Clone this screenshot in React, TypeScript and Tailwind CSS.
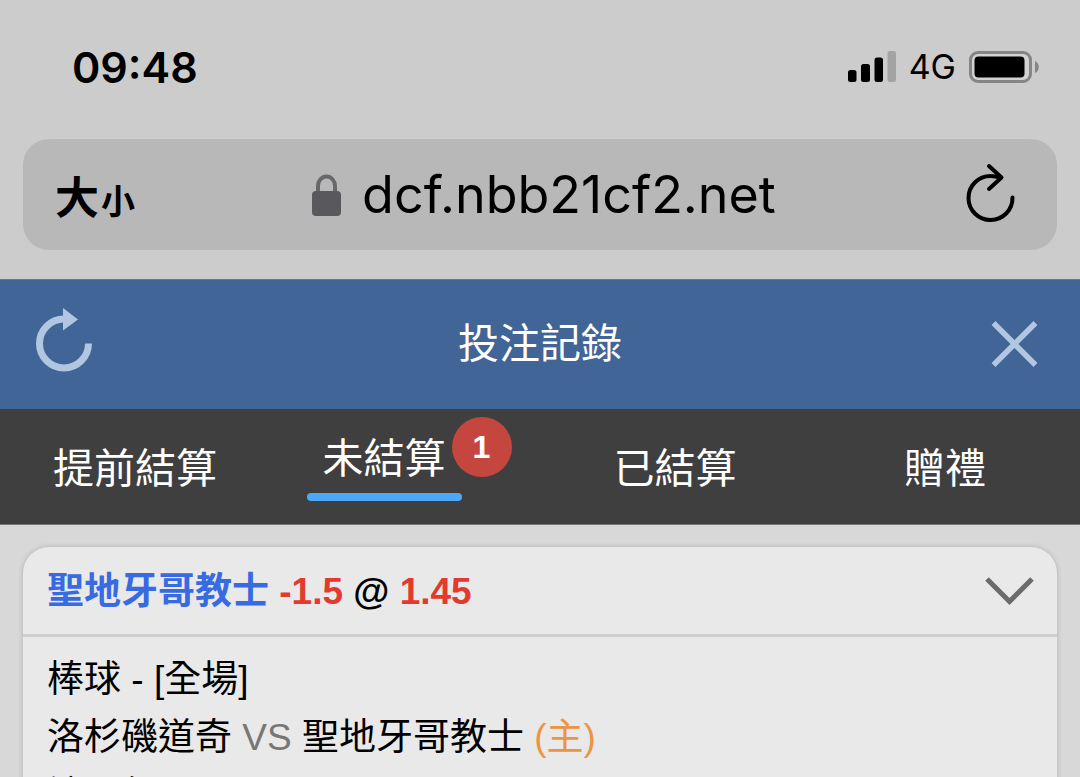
import React, { useState } from "react";

interface Tab {
  id: string;
  label: string;
  count?: number;
}

interface Bet {
  pick: string;
  handicap: string;
  odds: string;
  sport: string;
  period: string;
  away: string;
  home: string;
  market: string;
}

const TABS: Tab[] = [
  { id: "cashout", label: "提前結算" },
  { id: "open", label: "未結算", count: 1 },
  { id: "settled", label: "已結算" },
  { id: "gift", label: "贈禮" },
];

const BETS: Bet[] = [
  {
    pick: "聖地牙哥教士",
    handicap: "-1.5",
    odds: "1.45",
    sport: "棒球",
    period: "全場",
    away: "洛杉磯道奇",
    home: "聖地牙哥教士",
    market: "讓分盤",
  },
];

const StatusBar: React.FC = () => (
  <div className="flex h-[139px] items-start justify-between pt-[42px] pr-10 pl-[72px] font-['Inter',sans-serif]">
    <span className="text-[43px] leading-[50px] font-semibold">09:48</span>
    <div className="flex h-[50px] items-center gap-[13px]">
      <svg width="48" height="32" viewBox="0 0 48 32" aria-hidden="true">
        <rect x="0" y="19" width="8.5" height="12" rx="2.5" />
        <rect x="13" y="13" width="9" height="18" rx="2.5" />
        <rect x="26.500" y="6.500" width="8.5" height="24.500" rx="2.5" />
        <rect x="39.500" y="0" width="8.5" height="31" rx="2.5" fill="#a3a3a3" />
      </svg>
      <span className="text-[34px] leading-[50px]">4G</span>
      <svg width="71" height="32" viewBox="0 0 71 32" aria-hidden="true">
        <rect x="1.500" y="1.500" width="60" height="29" rx="7.500" fill="#d2d2d2" stroke="#858585" strokeWidth="3" />
        <rect x="5.500" y="5.500" width="50" height="21" rx="4" />
        <path d="M66 10c5 2 5 10 0 12z" fill="#858585" />
      </svg>
    </div>
  </div>
);

const AddressBar: React.FC = () => (
  <div className="mx-[23px] flex h-[111px] items-center justify-between rounded-[26px] bg-[#b8b8b8] pr-10 pl-8">
    <button
      type="button"
      className="flex items-baseline gap-0.5 font-['Noto_Sans_CJK_TC',sans-serif] font-bold"
    >
      <span className="text-[44px]">大</span>
      <span className="text-[34px]">小</span>
    </button>
    <div className="flex items-center gap-5">
      <svg width="30" height="42" viewBox="0 0 30 42" aria-hidden="true">
        <path d="M6 20V12a8.500 9.500 0 0 1 17 0v8" fill="none" stroke="#68686c" strokeWidth="4" />
        <rect x="0" y="17" width="29" height="25" rx="4" fill="#58585d" />
      </svg>
      <span className="font-['Inter',sans-serif] text-[52px] leading-[60px]">dcf.nbb21cf2.net</span>
    </div>
    <button type="button" aria-label="重新載入">
      <svg
        width="64"
        height="68"
        viewBox="0 0 64 68"
        fill="none"
        stroke="#000"
        strokeWidth="4"
        strokeLinecap="round"
        strokeLinejoin="round"
      >
        <path d="M47.500 16.800C44 15.500 41 15 37.500 15A22 22 0 1 0 59.500 36.500" />
        <path d="M36 5L48.500 16.500L36 28" />
      </svg>
    </button>
  </div>
);

const TitleBar: React.FC = () => (
  <header className="flex h-[130px] items-center justify-between border-t border-[#5f7796] bg-[#416596] pr-10 pl-9 text-white">
    <button type="button" aria-label="重新整理">
      <svg width="58" height="74" viewBox="0 0 58 74">
        <path d="M28 11A24.500 24.500 0 1 0 52.500 35.500" fill="none" stroke="#b1c7e1" strokeWidth="7" />
        <path d="M27 0L42 11.500L27 22.500z" fill="#b1c7e1" />
      </svg>
    </button>
    <h1 className="text-[41px]">投注記錄</h1>
    <button type="button" aria-label="關閉">
      <svg width="54" height="50" viewBox="0 0 54 50" stroke="#b1c7e1" strokeWidth="5.500">
        <path d="M7.500 3L49.500 45M49.500 3L7.500 45" />
      </svg>
    </button>
  </header>
);

interface TabBarProps {
  activeId: string;
  onSelect: (id: string) => void;
}

const TabBar: React.FC<TabBarProps> = ({ activeId, onSelect }) => (
  <nav className="grid h-[116px] grid-cols-4 border-b border-[#777777] bg-[#3f3f3f] text-[41px] leading-[60px] text-white">
    {TABS.map((tab) =>
      tab.id === activeId ? (
        <button key={tab.id} type="button" aria-current="page" className="flex items-start justify-center pl-2">
          <span className="flex flex-col gap-1 pt-5">
            <span className="px-4">{tab.label}</span>
            <span className="h-2 rounded-full bg-[#4fa8f5]" />
          </span>
          {tab.count && (
            <span className="mt-2 -ml-[10px] size-[60px] rounded-full bg-[#c5463f] text-[32px] font-bold">
              {tab.count}
            </span>
          )}
        </button>
      ) : (
        <button
          key={tab.id}
          type="button"
          onClick={() => onSelect(tab.id)}
          className="flex items-center justify-center pt-1"
        >
          {tab.label}
        </button>
      )
    )}
  </nav>
);

const BetCard: React.FC<{ bet: Bet }> = ({ bet }) => {
  const [open, setOpen] = useState(true);

  return (
    <article className="rounded-[26px] bg-[#e9e9e9] text-[37px] shadow-[0_0_5px_rgba(0,0,0,0.2)]">
      <button
        type="button"
        onClick={() => setOpen(!open)}
        aria-expanded={open}
        className="flex h-[90px] w-full items-center justify-between border-b-[3px] border-[#cecece] pt-0.5 pr-[22px] pl-6 font-bold"
      >
        <span>
          <span className="text-[#386ae1]">{bet.pick}</span>{" "}
          <span className="text-[#e23a2e]">{bet.handicap}</span> @{" "}
          <span className="text-[#e23a2e]">{bet.odds}</span>
        </span>
        <svg width="50" height="30" viewBox="0 0 50 30" fill="none" stroke="#6b6b6b" strokeWidth="5">
          <path d="M2 2L24.500 24.500L47 2" />
        </svg>
      </button>
      {open && (
        <div className="px-6 pt-[14px] leading-[58px]">
          <p>
            {bet.sport} - [{bet.period}]
          </p>
          <p>
            {bet.away} <span className="text-[#777777]">VS</span> {bet.home}{" "}
            <span className="text-[#ea9544]">(主)</span>
          </p>
          <p>{bet.market}</p>
        </div>
      )}
    </article>
  );
};

export default function App() {
  const [activeTab, setActiveTab] = useState("open");

  return (
    <div className="h-screen overflow-hidden bg-[#d8d8d8] font-['Liberation_Sans','Noto_Sans_CJK_TC',sans-serif] text-black">
      <div className="bg-[#cccccc] pb-[29px]">
        <StatusBar />
        <AddressBar />
      </div>
      <TitleBar />
      <TabBar activeId={activeTab} onSelect={setActiveTab} />
      <main className="space-y-6 px-[23px] pt-[22px]">
        {BETS.map((bet) => (
          <BetCard key={bet.pick} bet={bet} />
        ))}
      </main>
    </div>
  );
}
